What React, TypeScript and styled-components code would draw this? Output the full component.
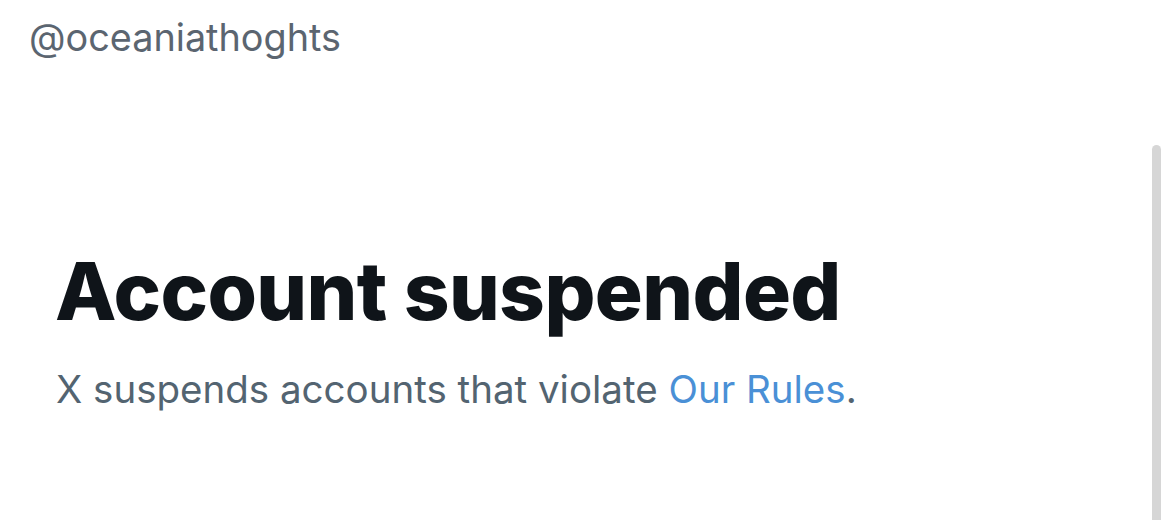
import React from "react";
import styled, { createGlobalStyle } from "styled-components";

const Global = createGlobalStyle`
  html, body { margin: 0; padding: 0; background: #fff; }
  body { font-family: Inter, "Noto Sans", sans-serif; }
`;

const Page = styled.div`
  width: 1170px;
  height: 520px;
  display: flex;
  flex-direction: column;
  position: relative;
  overflow: hidden;
`;

const Handle = styled.div`
  padding: 15px 0 0 29px;
  font-size: 37.8px;
  line-height: 44px;
  color: #5b6570;
`;

const Body = styled.div`
  display: flex;
  flex-direction: column;
  padding: 182px 0 0 55px;
`;

const Title = styled.h1`
  margin: 0;
  font-size: 80px;
  line-height: 100px;
  font-weight: 800;
  color: #0f1419;
  letter-spacing: -0.6px;
`;

const Note = styled.p`
  margin: 24px 0 0 1px;
  font-size: 38.5px;
  line-height: 48px;
  color: #536471;
`;

const Link = styled.a`
  color: #4a90d6;
  text-decoration: none;
`;

const Scrollbar = styled.div`
  position: absolute;
  left: 1152px;
  top: 145px;
  width: 9px;
  bottom: -10px;
  background: #d6d6d6;
  border-radius: 5px;
`;

export default function App() {
  return (
    <Page>
      <Global />
      <Handle>@oceaniathoghts</Handle>
      <Body>
        <Title>Account suspended</Title>
        <Note>
          X suspends accounts that violate <Link>Our Rules</Link>.
        </Note>
      </Body>
      <Scrollbar />
    </Page>
  );
}
